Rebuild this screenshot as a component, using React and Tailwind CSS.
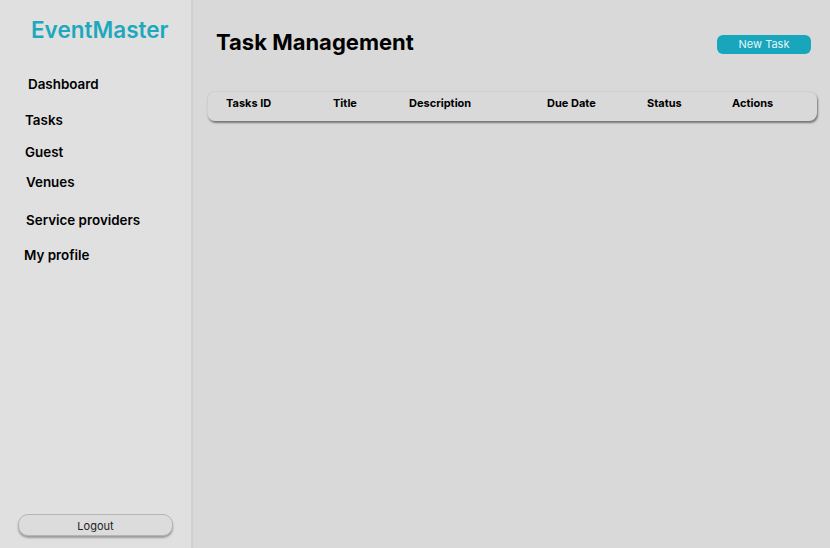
export default function App() {
  const font = { fontFamily: 'Inter, "Noto Sans", sans-serif' };
  return (
    <div style={font} className="flex w-[830px] h-[548px] bg-[#d9d9d9] text-black overflow-hidden">
      <aside className="w-[193px] shrink-0 h-full bg-[#e0e0e0] border-r-2 border-[#d0d0d0] flex flex-col">
        <div className="pt-[16px] pl-[31px] text-[22.5px] leading-[28px] font-semibold text-[#1ea8bd]">EventMaster</div>
        <nav className="flex flex-col text-[13.4px] font-semibold leading-[16px]">
          <div className="mt-[32px] pl-[28px]">Dashboard</div>
          <div className="mt-[20px] pl-[25px]">Tasks</div>
          <div className="mt-[16px] pl-[25px]">Guest</div>
          <div className="mt-[14px] pl-[26px]">Venues</div>
          <div className="mt-[22px] pl-[26px]">Service providers</div>
          <div className="mt-[19px] pl-[24px]">My profile</div>
        </nav>
        <div className="mt-auto mb-[12px] ml-[18px] w-[155px] h-[22px] rounded-[10px] border border-[#b5b5b5] bg-[#dcdcdc] shadow-[0_2px_2px_rgba(0,0,0,0.3)] flex items-center justify-center pt-[2px] text-[11px] text-[#222]">
          Logout
        </div>
      </aside>
      <main className="flex-1 flex flex-col">
        <div className="flex items-start justify-between">
          <h1 className="mt-[29px] ml-[23px] text-[22px] leading-[26px] font-bold">Task Management</h1>
          <button className="mt-[35px] mr-[19px] w-[94px] h-[19px] rounded-[6px] bg-[#18a6bd] text-[11px] leading-[19px] text-[#e6f6f9]">New Task</button>
        </div>
        <div className="mt-[36px] ml-[14px] mr-[13px] h-[30px] rounded-[8px] bg-[#d9d9d9] border-l border-t border-[#cfcfcf] shadow-[1px_2px_2px_rgba(0,0,0,0.45)] relative text-[11px] font-bold">
          <span className="absolute left-[18px] top-[3px]">Tasks ID</span>
          <span className="absolute left-[125px] top-[3px]">Title</span>
          <span className="absolute left-[201px] top-[3px]">Description</span>
          <span className="absolute left-[339px] top-[3px]">Due Date</span>
          <span className="absolute left-[439px] top-[3px]">Status</span>
          <span className="absolute left-[524px] top-[3px]">Actions</span>
        </div>
      </main>
    </div>
  );
}
